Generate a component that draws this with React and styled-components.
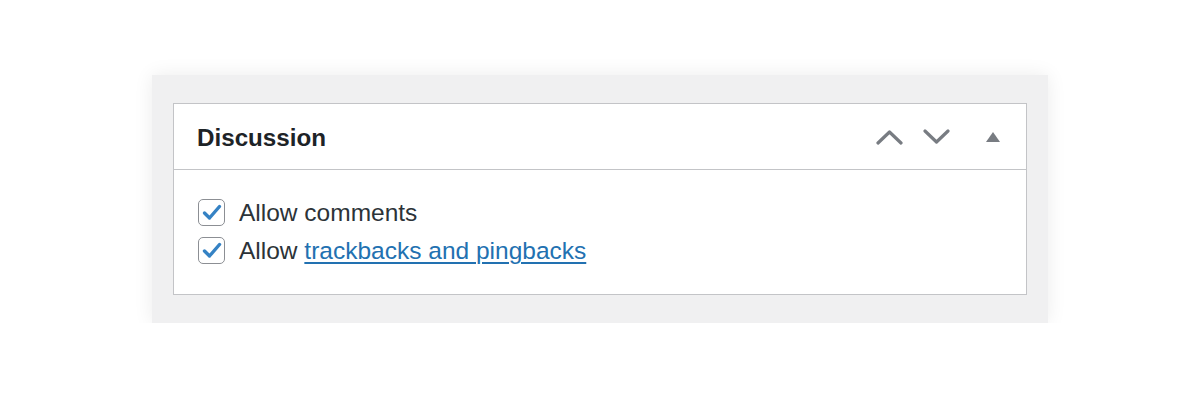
import React from "react";
import styled, { createGlobalStyle } from "styled-components";

const Global = createGlobalStyle`
  html, body { margin: 0; padding: 0; background: #ffffff; }
  body { font-family: "Liberation Sans", Arial, sans-serif; }
`;

const Page = styled.div`
  display: flex;
  justify-content: center;
  padding-top: 75px;
`;

const Panel = styled.div`
  width: 896px;
  box-sizing: border-box;
  padding: 28px 21px;
  background: #f0f0f1;
  box-shadow: 0 0 18px rgba(0, 0, 0, 0.08);
`;

const Box = styled.section`
  background: #ffffff;
  border: 1px solid #c3c4c7;
`;

const Header = styled.header`
  display: flex;
  align-items: center;
  justify-content: space-between;
  height: 65px;
  padding: 0 26px 0 23px;
  border-bottom: 1px solid #c3c4c7;
`;

const Title = styled.h2`
  margin: 0;
  font-size: 24.2px;
  font-weight: 700;
  color: #1d2327;
  position: relative;
  top: 1px;
`;

const Actions = styled.div`
  display: flex;
  align-items: center;
`;

const IconButton = styled.button`
  display: flex;
  align-items: center;
  justify-content: center;
  background: none;
  border: 0;
  padding: 0;
  margin-left: ${(p) => p.$gap || 0}px;
  color: #787c82;
  cursor: pointer;
`;

const Body = styled.div`
  display: flex;
  flex-direction: column;
  gap: 11px;
  padding: 29px 24px 30px;
`;

const Row = styled.label`
  display: flex;
  align-items: center;
  gap: 14px;
  font-size: 24.5px;
  line-height: 27px;
  color: #2c3338;
`;

const Check = styled.span`
  width: 27px;
  height: 27px;
  box-sizing: border-box;
  border: 1.5px solid #8c8f94;
  border-radius: 5px;
  display: flex;
  align-items: center;
  justify-content: center;
  background: #fff;
`;

const Link = styled.a`
  color: #2271b1;
  text-decoration: underline;
  text-underline-offset: 3px;
  text-decoration-thickness: 1.5px;
`;

const Chevron = ({ up }) => (
  <svg width="27" height="16" viewBox="0 0 27 16" fill="none">
    <path
      d={up ? "M2 14 L13.5 3 L25 14" : "M2 2 L13.5 13 L25 2"}
      stroke="currentColor"
      strokeWidth="3.2"
      strokeLinecap="round"
      strokeLinejoin="round"
    />
  </svg>
);

const Triangle = () => (
  <svg width="14" height="10" viewBox="0 0 14 10">
    <path d="M7 0 L14 10 L0 10 Z" fill="currentColor" />
  </svg>
);

const Tick = () => (
  <svg width="20" height="17" viewBox="0 0 20 17" fill="none">
    <path
      d="M2.5 9 L7.5 14 L17.5 2.5"
      stroke="#3582c4"
      strokeWidth="3.4"
      strokeLinecap="round"
      strokeLinejoin="round"
    />
  </svg>
);

export default function App() {
  return (
    <>
      <Global />
      <Page>
        <Panel>
          <Box>
            <Header>
              <Title>Discussion</Title>
              <Actions>
                <IconButton aria-label="Move up">
                  <Chevron up />
                </IconButton>
                <IconButton $gap={20} aria-label="Move down">
                  <Chevron />
                </IconButton>
                <IconButton $gap={36} aria-label="Toggle panel">
                  <Triangle />
                </IconButton>
              </Actions>
            </Header>
            <Body>
              <Row>
                <Check>
                  <Tick />
                </Check>
                <span>Allow comments</span>
              </Row>
              <Row>
                <Check>
                  <Tick />
                </Check>
                <span>
                  Allow <Link href="#">trackbacks and pingbacks</Link>
                </span>
              </Row>
            </Body>
          </Box>
        </Panel>
      </Page>
    </>
  );
}
